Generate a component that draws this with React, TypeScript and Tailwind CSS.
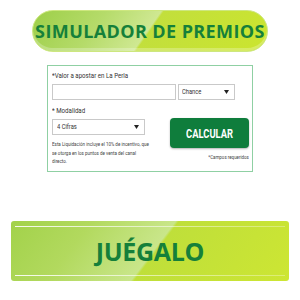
const Caret = () => (
  <svg width="5" height="4" viewBox="0 0 5 4" className="shrink-0">
    <path d="M0 0 L5 0 L2.5 4 Z" fill="#222" />
  </svg>
);

const Narrow = ({ children, className = "" }: { children: React.ReactNode; className?: string }) => (
  <span className={`inline-block whitespace-nowrap origin-left scale-x-[0.77] ${className}`}>{children}</span>
);

export default function App() {
  return (
    <div className="w-[300px] h-[300px] bg-white flex flex-col items-center overflow-hidden font-['Roboto',sans-serif]">
      {/* top banner */}
      <div className="mt-[10px] w-[236px] h-[42px] rounded-full border border-[#cde77f] bg-[linear-gradient(125deg,#9dcf48_0%,#b5db6a_28%,#cfe892_49%,#c2df3c_50%,#cbe52f_100%)] shadow-[inset_0_-3px_0_rgba(255,255,255,0.25)] flex items-center justify-center">
        <span className="font-['Open_Sans',sans-serif] font-bold text-[18px] tracking-[0.4px] text-[#15803a] leading-none">
          SIMULADOR DE PREMIOS
        </span>
      </div>

      {/* form */}
      <div className="mt-[13px] w-[206px] h-[107px] border border-[#8fd0a3] pl-[4px] pr-[3px] pt-[5px] text-[#333]">
        <div className="h-[10px] text-[8px] leading-[10px]">
          <Narrow>*Valor a apostar en La Perla</Narrow>
        </div>
        <div className="mt-[3px] flex gap-[2px]">
          <div className="w-[124px] h-[16px] border border-[#c9c9c9] bg-white" />
          <div className="w-[57px] h-[16px] border border-[#c9c9c9] bg-white flex items-center justify-between pl-[3px] pr-[5px]">
            <span className="text-[7.5px] leading-none"><Narrow>Chance</Narrow></span>
            <Caret />
          </div>
        </div>
        <div className="flex">
          <div className="w-[93px]">
            <div className="mt-[6px] h-[10px] text-[8px] leading-[10px]">
              <Narrow>* Modalidad</Narrow>
            </div>
            <div className="mt-[3px] w-[93px] h-[16px] border border-[#c9c9c9] bg-white flex items-center justify-between pl-[4px] pr-[5px]">
              <span className="text-[7.5px] leading-none"><Narrow>4 Cifras</Narrow></span>
              <Caret />
            </div>
            <p className="mt-[5px] w-[140px] whitespace-nowrap origin-left scale-x-[0.75] text-[6px] leading-[8.5px] text-[#444]">
              Esta Liquidación incluye el 10% de incentivo, que
              <br />
              se otorga en los puntos de venta del canal
              <br />
              directo.
            </p>
          </div>
          <div className="ml-auto w-[79px] pt-[18px] flex flex-col items-end">
            <div className="w-[79px] h-[30px] rounded-[4px] bg-[#0f7d3c] shadow-[0_1px_2px_rgba(0,0,0,0.3)] flex items-center justify-center">
              <span className="inline-block origin-center scale-x-[0.72] text-white font-bold text-[13px] leading-none">CALCULAR</span>
            </div>
            <span className="mt-[5px] inline-block whitespace-nowrap origin-right scale-x-[0.74] text-[6px] leading-[7px] text-[#444]">
              *Campos requeridos
            </span>
          </div>
        </div>
      </div>

      {/* bottom banner */}
      <div className="relative mt-[49px] w-[278px] h-[60px] rounded-[3px] bg-[linear-gradient(127deg,#a2d24a_0%,#b2d95e_25%,#c9e68a_51%,#bfdf3a_52%,#cde633_100%)] flex items-center justify-center">
        <div className="absolute left-[4px] right-[4px] top-[5px] h-[1px] bg-[linear-gradient(90deg,rgba(255,255,255,0.9),rgba(255,255,255,0.5)_60%,rgba(255,255,255,0.3))]" />
        <div className="absolute left-[4px] right-[4px] bottom-[5px] h-[1px] bg-[linear-gradient(90deg,rgba(255,255,255,0.9),rgba(255,255,255,0.5)_60%,rgba(255,255,255,0.3))]" />
        <span className="relative font-['Open_Sans',sans-serif] font-bold text-[25px] tracking-[-0.3px] leading-none text-[#15803a]">
          JUÉGALO
        </span>
      </div>
    </div>
  );
}
